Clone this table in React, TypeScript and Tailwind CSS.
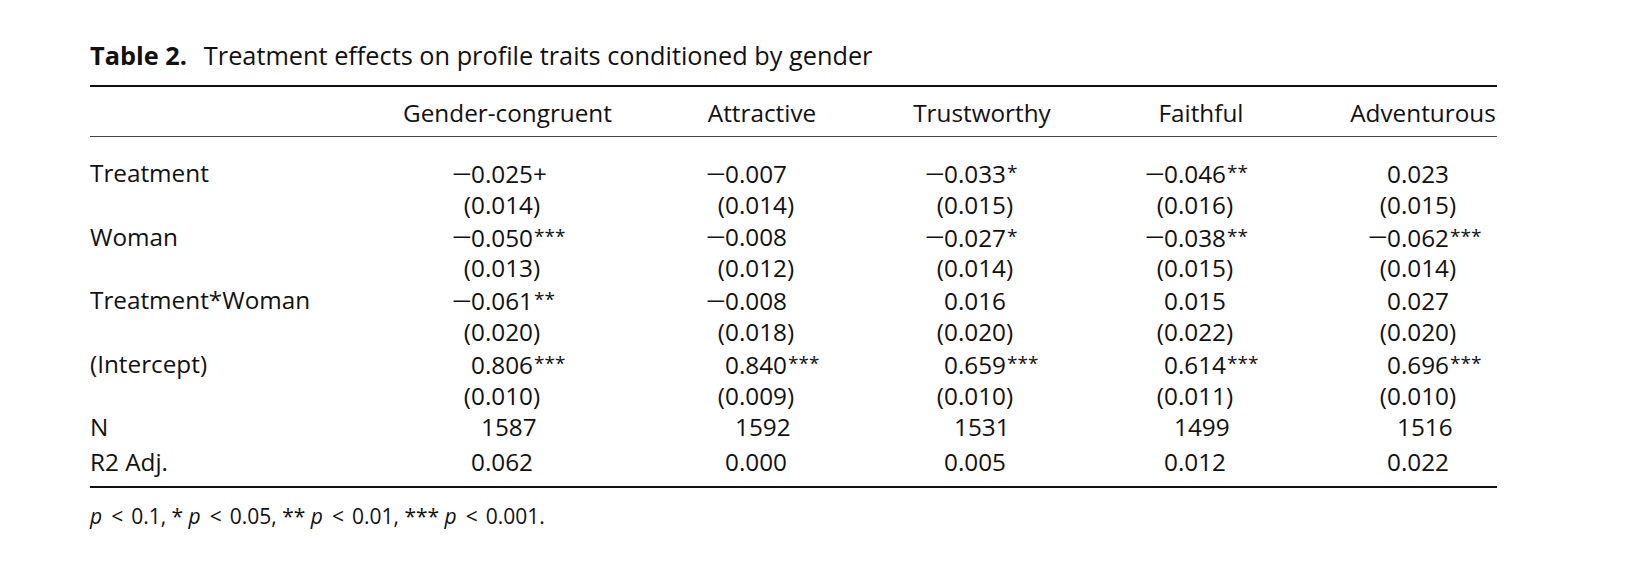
import React from "react";

type Row = { label: string; values: string[]; kind?: "n" };

const rows: Row[] = [
  { label: "Treatment", values: ["−0.025+", "−0.007", "−0.033*", "−0.046**", "0.023"] },
  { label: "", values: ["(0.014)", "(0.014)", "(0.015)", "(0.016)", "(0.015)"] },
  { label: "Woman", values: ["−0.050***", "−0.008", "−0.027*", "−0.038**", "−0.062***"] },
  { label: "", values: ["(0.013)", "(0.012)", "(0.014)", "(0.015)", "(0.014)"] },
  { label: "Treatment*Woman", values: ["−0.061**", "−0.008", "0.016", "0.015", "0.027"] },
  { label: "", values: ["(0.020)", "(0.018)", "(0.020)", "(0.022)", "(0.020)"] },
  { label: "(Intercept)", values: ["0.806***", "0.840***", "0.659***", "0.614***", "0.696***"] },
  { label: "", values: ["(0.010)", "(0.009)", "(0.010)", "(0.011)", "(0.010)"] },
  { label: "N", values: ["1587", "1592", "1531", "1499", "1516"], kind: "n" },
];

const r2: Row = { label: "R2 Adj.", values: ["0.062", "0.000", "0.005", "0.012", "0.022"] };

const headers = ["Gender-congruent", "Attractive", "Trustworthy", "Faithful", "Adventurous"];
const pads = ["pl-[51px]", "pl-[94px]", "pl-[15px]", "pl-[93px]", "pl-[20px]"];

function Cell({ v, pad, n }: { v: string; pad: string; n?: boolean }) {
  if (n) {
    return (
      <div className={`flex items-center whitespace-nowrap ${pad}`}>
        <span className="pl-[28px]">{v}</span>
      </div>
    );
  }
  let sign = "";
  let rest = v;
  if (v.startsWith("−") || v.startsWith("(")) {
    sign = v[0];
    rest = v.slice(1);
  }
  const m = rest.match(/^(.*?)(\*+)?$/);
  const num = m ? m[1] : rest;
  const stars = m && m[2] ? m[2] : "";
  return (
    <div className={`flex items-center whitespace-nowrap ${pad}`}>
      <span className={`flex w-[18px] ${sign === "(" ? "justify-end" : "justify-start"}`}>
        {sign === "−" ? (
          <span className="inline-block origin-left scale-x-[1.45] -translate-x-[1px]">−</span>
        ) : (
          sign
        )}
      </span>
      <span>
        {num}
        {stars && <span className="text-[19px] align-[4px] ml-[1px]">{stars}</span>}
      </span>
    </div>
  );
}

function DataRow({ row, h }: { row: Row; h: string }) {
  return (
    <div className={`grid grid-cols-[312px_211px_298px_142px_296px_148px] ${h} leading-[31.8px]`}>
      <div className="whitespace-nowrap">{row.label}</div>
      {row.values.map((v, i) => (
        <Cell key={i} v={v} pad={pads[i]} n={row.kind === "n"} />
      ))}
    </div>
  );
}

function Pl() {
  return (
    <>
      <i className="italic">p</i>
      <span className="ml-[9px] mr-[8px]">&lt;</span>
    </>
  );
}

export default function App() {
  return (
    <div className="w-[1634px] h-[583px] bg-white text-[#111] font-['Open_Sans',sans-serif] pt-[38px]">
      <div className="ml-[90px] w-[1407px]">
        <div className="h-[34px] leading-[34px] text-[25.3px] whitespace-nowrap flex">
          <span className="font-bold">Table 2.</span>
          <span className="ml-[17px]">Treatment effects on profile traits conditioned by gender</span>
        </div>
        <div className="mt-[13px] h-[2px] bg-[#111]" />
        <div className="text-[24.3px]">
          <div className="grid grid-cols-[312px_211px_298px_142px_296px_148px] pt-[11px] pb-[8px] leading-[30px]">
            <div />
            {headers.map((h) => (
              <div key={h} className="flex justify-center whitespace-nowrap">
                {h}
              </div>
            ))}
          </div>
          <div className="h-[1px] bg-[#444]" />
          <div className="pt-[20px]">
            {rows.map((r, i) => (
              <DataRow key={i} row={r} h="h-[31.8px]" />
            ))}
            <div className="mt-[2.5px]">
              <DataRow row={r2} h="h-[31.8px]" />
            </div>
          </div>
          <div className="mt-[8.5px] h-[2px] bg-[#111]" />
        </div>
        <div className="mt-[15px] text-[21px] leading-[26px] whitespace-nowrap">
          <Pl />0.1, * <Pl />0.05, ** <Pl />0.01, *** <Pl />0.001.
        </div>
      </div>
    </div>
  );
}
